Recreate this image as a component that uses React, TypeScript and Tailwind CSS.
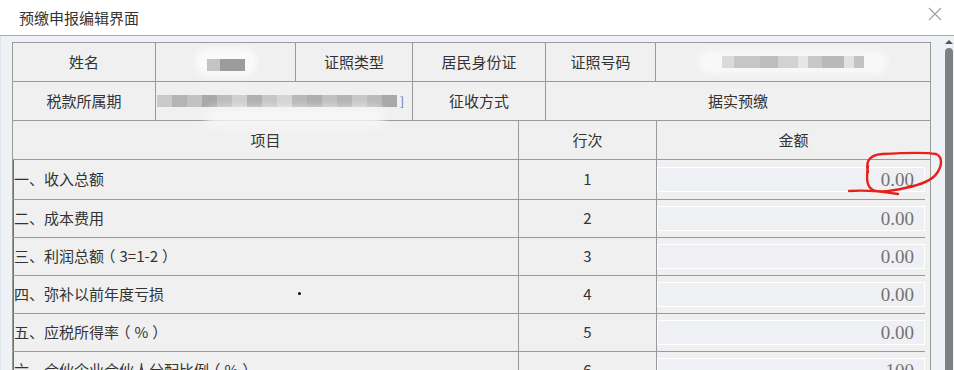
import React from "react";

const rows = [
  { label: "一、收入总额", no: "1", value: "0.00", h: "h-[40px]" },
  { label: "二、成本费用", no: "2", value: "0.00", h: "h-[38px]" },
  { label: "三、利润总额（3=1-2）", no: "3", value: "0.00", h: "h-[38px]" },
  { label: "四、弥补以前年度亏损", no: "4", value: "0.00", h: "h-[38px]" },
  { label: "五、应税所得率（%）", no: "5", value: "0.00", h: "h-[38px]" },
  { label: "六、合伙企业合伙人分配比例（%）", no: "6", value: "100", h: "h-[38px]" },
];

const barShades = [
  "#c9c9c9", "#b4b4b4", "#c2c2c2", "#a9a9a9", "#bdbdbd", "#cfcfcf", "#b0b0b0", "#c6c6c6",
  "#d4d4d4", "#b8b8b8", "#aeaeae", "#c0c0c0", "#b3b3b3", "#c8c8c8", "#bababa", "#a8a8a8",
];

function Label({ text }: { text: string }) {
  const parts = text.split(/(（|）)/);
  return (
    <span>
      {parts.map((p, i) =>
        p === "（" || p === "）" ? (
          <span key={i} className="[font-feature-settings:'halt'] px-[4px]">
            {p}
          </span>
        ) : (
          <React.Fragment key={i}>{p}</React.Fragment>
        )
      )}
    </span>
  );
}

export default function App() {
  return (
    <div className="relative w-[954px] h-[370px] overflow-hidden bg-white font-['Noto_Sans_CJK_SC','Noto_Sans',sans-serif] text-[15px] text-[#333]">
      {/* title bar */}
      <div className="h-[36px] border-b border-[#a9a9a9] flex items-center justify-between pl-[19px] pr-[12px]">
        <span className="text-[15px] leading-none text-[#333]">预缴申报编辑界面</span>
        <svg width="14" height="14" viewBox="0 0 14 14" className="mb-[8px]">
          <path d="M1 1L13 13M13 1L1 13" stroke="#a0a0a0" strokeWidth="1.1" fill="none" />
        </svg>
      </div>

      {/* body */}
      <div className="flex h-[334px] bg-[#eef1f6] border-l border-[#dfe4ea]">
        <div className="pl-[11px] pt-[6px] w-[930px]">
          <div className="w-[919px] border-l border-t border-r border-[#9a9a9a] bg-[#f0f0f0]">
            {/* row 1 */}
            <div className="flex h-[39px]">
              <div className="w-[143px] border-r border-b border-[#9a9a9a] flex items-center justify-center">姓名</div>
              <div className="w-[140px] border-r border-b border-[#9a9a9a] flex items-center justify-center">
                <div className="relative w-[62px] h-[28px] flex items-center justify-center">
                  <div className="absolute inset-0 rounded-full bg-[#fafafa] blur-[3px]" />
                  <div className="relative flex mt-[6px] blur-[0.6px]">
                    <div className="w-[13px] h-[12px] bg-[#c4c4c4]" />
                    <div className="w-[25px] h-[12px] bg-[#9c9c9c]" />
                  </div>
                </div>
              </div>
              <div className="w-[117px] border-r border-b border-[#9a9a9a] flex items-center justify-center">证照类型</div>
              <div className="w-[133px] border-r border-b border-[#9a9a9a] flex items-center justify-center">居民身份证</div>
              <div className="w-[110px] border-r border-b border-[#9a9a9a] flex items-center justify-center">证照号码</div>
              <div className="w-[274px] border-b border-[#9a9a9a] flex items-center justify-center">
                <div className="relative w-[190px] h-[24px] flex items-center justify-center">
                  <div className="absolute inset-0 rounded-full bg-[#f8f8f8] blur-[3px]" />
                  <div className="relative flex blur-[0.6px]">
                    <div className="w-[12px] h-[12px] bg-[#dadada]" />
                    <div className="w-[26px] h-[12px] bg-[#c6c6c6]" />
                    <div className="w-[18px] h-[12px] bg-[#bdbdbd]" />
                    <div className="w-[20px] h-[12px] bg-[#d2d2d2]" />
                    <div className="w-[10px] h-[12px] bg-[#e6e6e6]" />
                    <div className="w-[14px] h-[12px] bg-[#c8c8c8]" />
                    <div className="w-[22px] h-[12px] bg-[#b9b9b9]" />
                    <div className="w-[10px] h-[12px] bg-[#e2e2e2]" />
                    <div className="w-[10px] h-[12px] bg-[#c2c2c2]" />
                  </div>
                </div>
              </div>
            </div>
            {/* row 2 */}
            <div className="flex h-[39px]">
              <div className="w-[143px] border-r border-b border-[#9a9a9a] flex items-center justify-center">税款所属期</div>
              <div className="w-[257px] border-r border-b border-[#9a9a9a] flex items-center pl-[1px]">
                <div className="flex blur-[0.6px]">
                  {barShades.map((c, i) => (
                    <div key={i} className="w-[15px] h-[12px]" style={{ backgroundColor: c }} />
                  ))}
                </div>
                <span className="ml-[3px] text-[12px] leading-none text-[#5a6fa8]">]</span>
              </div>
              <div className="w-[133px] border-r border-b border-[#9a9a9a] flex items-center justify-center">征收方式</div>
              <div className="w-[384px] border-b border-[#9a9a9a] flex items-center justify-center">据实预缴</div>
            </div>
            {/* header */}
            <div className="flex h-[39px]">
              <div className="w-[506px] border-r border-b border-[#9a9a9a] flex items-center justify-center">项目</div>
              <div className="w-[138px] border-r border-b border-[#9a9a9a] flex items-center justify-center">行次</div>
              <div className="w-[273px] border-b border-[#9a9a9a] flex items-center justify-center">金额</div>
            </div>
            {/* data rows */}
            {rows.map((r) => (
              <div key={r.no} className={`flex w-[912px] ${r.h}`}>
                <div className="w-[506px] border-r border-b border-[#9a9a9a] flex items-center pl-[1px] shadow-[inset_1px_0_0_#6f6f6f]">
                  <Label text={r.label} />
                </div>
                <div className="w-[138px] border-r border-b border-[#9a9a9a] flex items-center justify-center">{r.no}</div>
                <div className="w-[268px] border-b border-[#9a9a9a] flex items-center">
                  <div className="w-full h-[25px] bg-[#eef0f4] border border-white flex items-center justify-end pr-[10px] font-['Liberation_Serif',serif] text-[19px] leading-none text-[#737373]">
                    {r.value}
                  </div>
                </div>
              </div>
            ))}
          </div>
        </div>
        {/* scrollbar */}
        <div className="w-[23px] flex justify-end">
          <div className="w-[10px] flex flex-col items-center pt-[4px]">
            <div className="w-0 h-0 border-l-[4px] border-r-[4px] border-b-[4px] border-l-transparent border-r-transparent border-b-[#555]" />
            <div className="mt-[4px] w-[8px] flex-1 bg-[#7f7f7f] rounded-t-[4px]" />
          </div>
        </div>
      </div>

      {/* redaction smudge */}
      <div className="absolute left-[205px] top-[108px] w-[180px] h-[20px] rounded-full bg-[#f8f8f8] blur-[4px] opacity-80" />

      {/* stray dot */}
      <div className="absolute left-[298px] top-[292px] w-[3px] h-[3px] rounded-full bg-black" />

      {/* red hand-drawn annotation */}
      <svg className="absolute left-0 top-0 pointer-events-none" width="954" height="370" viewBox="0 0 954 370">
        <path
          d="M868 172 C 865 161, 870 155, 882 154 C 900 153, 925 152, 936 154 C 943 157, 942 166, 937 173 C 932 181, 920 185, 905 188 C 892 191, 880 193, 873 190 C 867 187, 866 180, 868 166"
          stroke="#e8201c"
          strokeWidth="2.4"
          fill="none"
          strokeLinecap="round"
        />
        <path d="M849 191 C 862 190, 880 191, 898 194" stroke="#e8201c" strokeWidth="2.4" fill="none" strokeLinecap="round" />
      </svg>
    </div>
  );
}
